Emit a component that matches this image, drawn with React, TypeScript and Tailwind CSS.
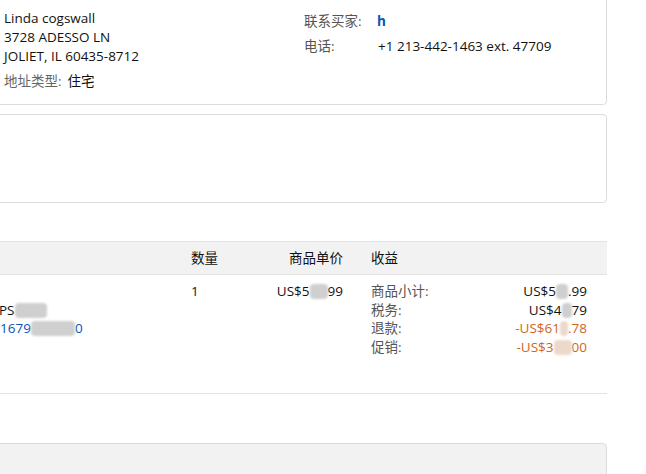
import React from 'react';

const Blur = ({ w, tone = 'gray' }: { w: number; tone?: 'gray' | 'peach' }) => (
  <span
    className={`inline-block h-[15px] align-[-3px] rounded-sm blur-[1px] ${
      tone === 'peach' ? 'bg-[#ecd9cc]' : 'bg-[#cfcfcf]'
    }`}
    style={{ width: w }}
  />
);

export default function App() {
  return (
    <div className="h-[474px] w-[646px] overflow-hidden bg-white text-[13.5px] text-[#111] font-['Open_Sans','Noto_Sans_CJK_SC',sans-serif]">
      <div className="-ml-4 -mt-2 w-[623px] flex flex-col">
        {/* Shipping address */}
        <div className="h-[113px] rounded border border-[#dcdcdc] pl-[19px] pt-4 grid grid-cols-[300px_1fr] items-start">
          <div className="leading-[19px]">
            <div>Linda cogswall</div>
            <div>3728 ADESSO LN</div>
            <div>JOLIET, IL 60435-8712</div>
            <div className="mt-[6px]">
              <span className="text-[#666]">地址类型:</span>
              <span className="ml-1.5">住宅</span>
            </div>
          </div>
          <div className="pt-[3px] leading-[19px] flex flex-col gap-[6px]">
            <div className="flex">
              <span className="w-[73px] text-[#555]">联系买家:</span>
              <span className="font-bold text-[#0654ba]">h</span>
            </div>
            <div className="flex">
              <span className="w-[74px] text-[#555]">电话:</span>
              <span>+1 213-442-1463 ext. 47709</span>
            </div>
          </div>
        </div>

        {/* Empty panel */}
        <div className="mt-[9px] h-[89px] rounded border border-[#dcdcdc]" />

        {/* Line items */}
        <div className="mt-[38px]">
          <div className="h-[34px] grid grid-cols-[207px_70px_82px_1fr] items-center bg-[#f2f2f2] border-y border-[#e3e3e3]">
            <div />
            <div>数量</div>
            <div className="text-right">商品单价</div>
            <div className="pl-7">收益</div>
          </div>
          <div className="h-[119px] grid grid-cols-[207px_70px_82px_1fr] items-start pt-[7px] leading-[18.7px] border-b border-[#e3e3e3]">
            <div className="pl-4">
              <div>&nbsp;</div>
              <div className="-ml-px">
                PS<Blur w={32} />
              </div>
              <div className="text-[#0654ba]">
                1679<Blur w={44} />0
              </div>
            </div>
            <div>1</div>
            <div className="text-right">
              US$5<Blur w={18} />99
            </div>
            <div className="pl-7 pr-5 grid grid-cols-[auto_1fr]">
              <span className="text-[#555]">商品小计:</span>
              <span className="text-right">
                US$5<Blur w={12} />.99
              </span>
              <span className="text-[#555]">税务:</span>
              <span className="text-right">
                US$4<Blur w={10} />79
              </span>
              <span className="text-[#555]">退款:</span>
              <span className="text-right text-[#cf661c]">
                -US$61<Blur w={8} tone="peach" />.78
              </span>
              <span className="text-[#555]">促销:</span>
              <span className="text-right text-[#cf661c]">
                -US$3<Blur w={18} tone="peach" />00
              </span>
            </div>
          </div>
        </div>

        {/* Bottom panel */}
        <div className="mt-[49px] h-[60px] rounded border border-[#dcdcdc] bg-[#f2f2f2]" />
      </div>
    </div>
  );
}
